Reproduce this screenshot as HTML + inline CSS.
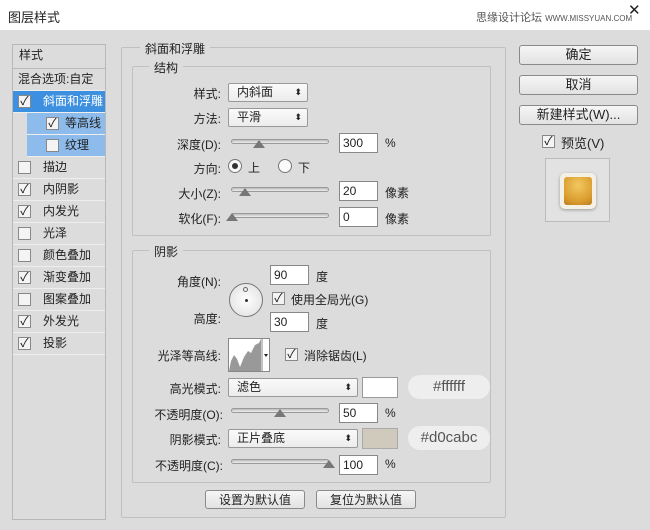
<!DOCTYPE html>
<html><head><meta charset="utf-8"><style>
*{margin:0;padding:0;box-sizing:border-box}
body{width:650px;height:530px;background:#dcdcdc;font-family:"Liberation Sans","Noto Sans CJK SC",sans-serif;font-size:12px;color:#222;position:relative;overflow:hidden}
.a{position:absolute}
.title{left:0;top:0;width:650px;height:30px;background:#fff}
.lp{left:12px;top:44px;width:94px;height:476px;border:1px solid #b8b8b8;background:#dcdcdc}
.li{position:absolute;left:0;width:92px;height:22px;border-bottom:1px solid #eee;line-height:21px;padding-left:30px;font-size:12px}
.cb{position:absolute;width:13px;height:13px;border:1px solid #888;background:#f4f4f4;font-size:12px;line-height:11px;text-align:center;color:#111}
.grp{border:1px solid #c0c0c0;border-radius:2px}
.lab{background:#dcdcdc;padding:0 5px;font-size:12px}
.btn{border:1px solid #8a8a8a;border-radius:3px;background:linear-gradient(#f6f6f6,#e2e2e2);text-align:center;font-size:13px;line-height:18px}
.sel{border:1px solid #999;border-radius:2px;background:linear-gradient(#fafafa,#ececec);padding-left:8px;line-height:17px;font-size:12px}
.sel:after{content:"⬍";position:absolute;right:5px;top:0;font-size:9px}
.inp{border:1px solid #888;background:#fff;padding-left:3px;line-height:18px;font-size:12px}
.track{height:5px;border:1px solid #999;border-radius:3px;background:linear-gradient(#bbb,#eee)}
.thumb{width:0;height:0;border-left:6px solid transparent;border-right:6px solid transparent;border-bottom:8px solid #777}
.r{text-align:right;width:100px}
.pill{background:#eee;border-radius:12px;text-align:center;font-size:15px;color:#555;line-height:24px}
</style></head><body>
<div class="a title"></div>
<div class="a" style="left:8px;top:7px;font-size:13px">图层样式</div>
<div class="a" style="left:476px;top:9px;font-size:11px;color:#555">思缘设计论坛 <span style="font-size:8px">WWW.MISSYUAN.COM</span></div>
<div class="a" style="left:628px;top:1px;font-size:15px">✕</div>

<div class="a lp">
 <div class="li" style="top:0;padding-left:6px;height:24px;border-bottom:1px solid #bbb">样式</div>
 <div class="li" style="top:24px;padding-left:5px">混合选项:自定</div>
 <div class="li" style="top:46px;background:#3d8fe0;color:#fff"><span class="cb" style="left:5px;top:4px">✓</span>斜面和浮雕</div>
 <div class="li" style="top:68px;left:14px;width:78px;background:#8dbcec;padding-left:38px"><span class="cb" style="left:19px;top:4px">✓</span>等高线</div>
 <div class="li" style="top:90px;left:14px;width:78px;background:#8dbcec;padding-left:38px"><span class="cb" style="left:19px;top:4px"></span>纹理</div>
 <div class="li" style="top:112px"><span class="cb" style="left:5px;top:4px"></span>描边</div>
 <div class="li" style="top:134px"><span class="cb" style="left:5px;top:4px">✓</span>内阴影</div>
 <div class="li" style="top:156px"><span class="cb" style="left:5px;top:4px">✓</span>内发光</div>
 <div class="li" style="top:178px"><span class="cb" style="left:5px;top:4px"></span>光泽</div>
 <div class="li" style="top:200px"><span class="cb" style="left:5px;top:4px"></span>颜色叠加</div>
 <div class="li" style="top:222px"><span class="cb" style="left:5px;top:4px">✓</span>渐变叠加</div>
 <div class="li" style="top:244px"><span class="cb" style="left:5px;top:4px"></span>图案叠加</div>
 <div class="li" style="top:266px"><span class="cb" style="left:5px;top:4px">✓</span>外发光</div>
 <div class="li" style="top:288px"><span class="cb" style="left:5px;top:4px">✓</span>投影</div>
</div>

<div class="a grp" style="left:121px;top:47px;width:385px;height:471px"></div>
<div class="a lab" style="left:140px;top:40px">斜面和浮雕</div>
<div class="a grp" style="left:132px;top:66px;width:359px;height:170px"></div>
<div class="a lab" style="left:149px;top:59px">结构</div>

<div class="a r" style="left:121px;top:85px">样式:</div>
<div class="a sel" style="left:228px;top:83px;width:80px;height:19px">内斜面</div>
<div class="a r" style="left:121px;top:110px">方法:</div>
<div class="a sel" style="left:228px;top:108px;width:80px;height:19px">平滑</div>
<div class="a r" style="left:121px;top:136px">深度(D):</div>
<div class="a track" style="left:231px;top:139px;width:98px"></div>
<div class="a thumb" style="left:253px;top:140px"></div>
<div class="a inp" style="left:339px;top:133px;width:39px;height:20px">300</div>
<div class="a" style="left:385px;top:136px">%</div>
<div class="a r" style="left:121px;top:160px">方向:</div>
<div class="a" style="left:228px;top:159px;width:14px;height:14px;border:1px solid #777;border-radius:50%;background:#fafafa"><div style="margin:3px;width:6px;height:6px;border-radius:50%;background:#333"></div></div>
<div class="a" style="left:248px;top:159px">上</div>
<div class="a" style="left:278px;top:159px;width:14px;height:14px;border:1px solid #777;border-radius:50%;background:#fafafa"></div>
<div class="a" style="left:298px;top:159px">下</div>
<div class="a r" style="left:121px;top:185px">大小(Z):</div>
<div class="a track" style="left:231px;top:187px;width:98px"></div>
<div class="a thumb" style="left:239px;top:188px"></div>
<div class="a inp" style="left:339px;top:181px;width:39px;height:20px">20</div>
<div class="a" style="left:385px;top:184px">像素</div>
<div class="a r" style="left:121px;top:210px">软化(F):</div>
<div class="a track" style="left:231px;top:213px;width:98px"></div>
<div class="a thumb" style="left:226px;top:213px"></div>
<div class="a inp" style="left:339px;top:207px;width:39px;height:20px">0</div>
<div class="a" style="left:385px;top:210px">像素</div>

<div class="a grp" style="left:132px;top:250px;width:359px;height:233px"></div>
<div class="a lab" style="left:149px;top:243px">阴影</div>
<div class="a r" style="left:121px;top:273px">角度(N):</div>
<div class="a" style="left:229px;top:283px;width:34px;height:34px;border:1px solid #777;border-radius:50%;background:radial-gradient(#fff,#ddd)"><div class="a" style="left:13px;top:3px;width:5px;height:5px;border:1px solid #666;border-radius:50%"></div><div class="a" style="left:15px;top:15px;width:3px;height:3px;background:#333;border-radius:50%"></div></div>
<div class="a inp" style="left:270px;top:265px;width:39px;height:20px">90</div>
<div class="a" style="left:316px;top:268px">度</div>
<div class="a cb" style="left:272px;top:292px">✓</div>
<div class="a" style="left:291px;top:291px">使用全局光(G)</div>
<div class="a r" style="left:121px;top:310px">高度:</div>
<div class="a inp" style="left:270px;top:312px;width:39px;height:20px">30</div>
<div class="a" style="left:316px;top:315px">度</div>
<div class="a r" style="left:121px;top:347px">光泽等高线:</div>
<div class="a" style="left:228px;top:338px;width:42px;height:34px;border:1px solid #888;background:#fff">
<svg width="40" height="32" style="position:absolute;left:0;top:0"><path d="M0 32 L2 22 L5 16 L8 20 L11 28 L15 18 L19 12 L22 14 L26 6 L30 4 L32 0 L32 32Z" fill="#999"/><line x1="33" y1="0" x2="33" y2="32" stroke="#888"/><path d="M35 15h4l-2 3z" fill="#222"/></svg></div>
<div class="a cb" style="left:285px;top:348px">✓</div>
<div class="a" style="left:304px;top:347px">消除锯齿(L)</div>
<div class="a r" style="left:121px;top:380px">高光模式:</div>
<div class="a sel" style="left:228px;top:378px;width:130px;height:19px">滤色</div>
<div class="a" style="left:362px;top:377px;width:36px;height:21px;border:1px solid #999;background:#fff"></div>
<div class="a pill" style="left:408px;top:375px;width:82px">#ffffff</div>
<div class="a" style="left:121px;top:406px;width:102px;text-align:right">不透明度(O):</div>
<div class="a track" style="left:231px;top:408px;width:98px"></div>
<div class="a thumb" style="left:274px;top:409px"></div>
<div class="a inp" style="left:339px;top:403px;width:39px;height:20px">50</div>
<div class="a" style="left:385px;top:406px">%</div>
<div class="a r" style="left:121px;top:431px">阴影模式:</div>
<div class="a sel" style="left:228px;top:429px;width:130px;height:19px">正片叠底</div>
<div class="a" style="left:362px;top:428px;width:36px;height:21px;border:1px solid #aaa;background:#d0cabc"></div>
<div class="a pill" style="left:408px;top:426px;width:82px">#d0cabc</div>
<div class="a" style="left:121px;top:457px;width:102px;text-align:right">不透明度(C):</div>
<div class="a track" style="left:231px;top:459px;width:98px"></div>
<div class="a thumb" style="left:323px;top:460px"></div>
<div class="a inp" style="left:339px;top:455px;width:39px;height:20px">100</div>
<div class="a" style="left:385px;top:457px">%</div>

<div class="a btn" style="left:205px;top:490px;width:100px;height:19px;font-size:12px">设置为默认值</div>
<div class="a btn" style="left:316px;top:490px;width:100px;height:19px;font-size:12px">复位为默认值</div>

<div class="a btn" style="left:519px;top:45px;width:119px;height:20px">确定</div>
<div class="a btn" style="left:519px;top:75px;width:119px;height:20px">取消</div>
<div class="a btn" style="left:519px;top:105px;width:119px;height:20px">新建样式(W)...</div>
<div class="a cb" style="left:542px;top:135px">✓</div>
<div class="a" style="left:561px;top:133px;font-size:13px">预览(V)</div>
<div class="a" style="left:545px;top:158px;width:65px;height:64px;border:1px solid #bbb;background:#e2e2e2">
<div class="a" style="left:14px;top:14px;width:36px;height:36px;border-radius:5px;background:#f4f0e6;box-shadow:0 1px 3px #999"><div style="margin:4px;width:28px;height:28px;border-radius:3px;background:radial-gradient(circle at 50% 30%,#f3c860,#d89a2c 70%,#b87a20)"></div></div>
</div>
</body></html>
